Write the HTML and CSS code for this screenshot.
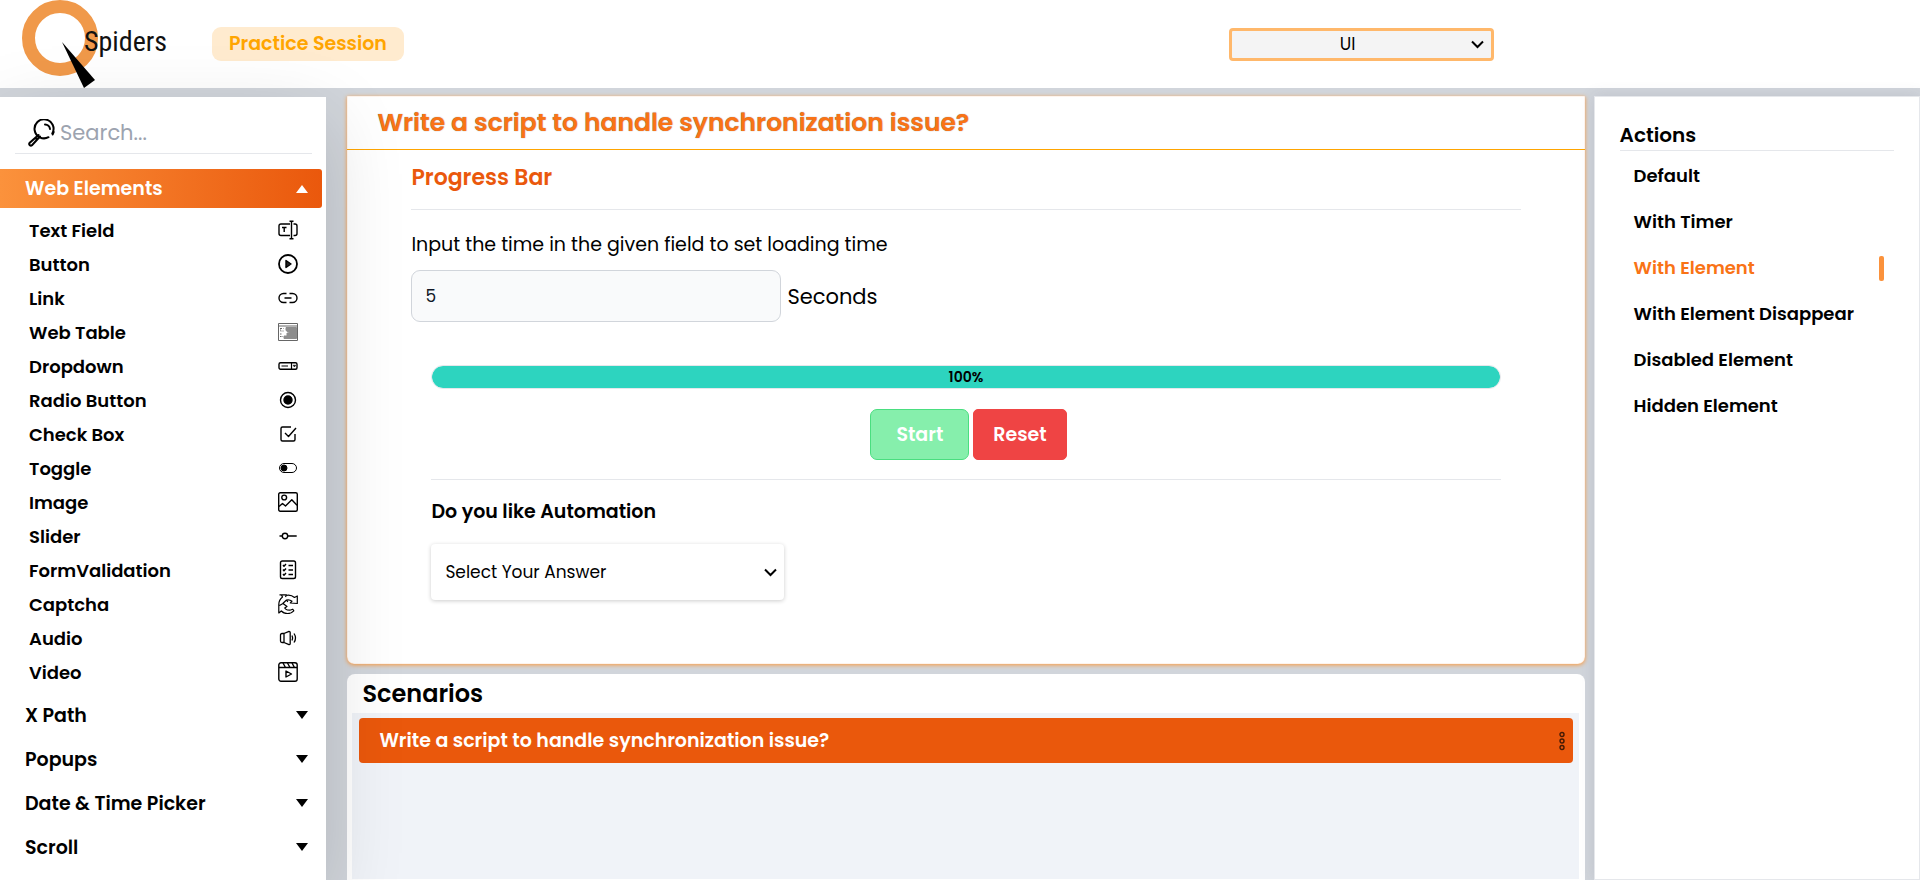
FILE: index.html
```html
<!DOCTYPE html>
<html lang="en">
<head>
<meta charset="utf-8">
<title>QSpiders Practice Session</title>
<link rel="stylesheet" href="styles.css">
</head>
<body>
<header class="topbar">
  <a class="logo" href="#" aria-label="QSpiders home">
    <svg width="150" height="88" viewBox="0 0 150 88">
      <circle cx="38" cy="38" r="31.5" fill="none" stroke="#f0994a" stroke-width="13"/>
      <path d="M40 42 73 80 62 88Z" fill="#000"/>
      <text class="logo-text" x="62" y="51">Spiders</text>
    </svg>
  </a>
  <span class="session">Practice Session</span>
  <select class="topic" aria-label="Topic"><option>UI</option></select>
</header>

<div class="layout">
  <aside class="sidebar">
    <label class="search">
      <svg width="28" height="28" viewBox="0 0 28 28" fill="none" stroke="#000" stroke-width="2" stroke-linecap="round">
        <path d="M24.300 14.500A9.500 9.500 0 1 0 20.500 18.200M24.700 15.500l1-2.500"/>
        <path d="M17 5.500a5 5 0 0 1 5 4.500M10.500 16l-9 8c-1 1.500 1 3.500 2.500 2.200l8-8.700M8 19.500l1 1"/>
      </svg>
      <input type="text" placeholder="Search..." aria-label="Search">
    </label>
    <nav class="menu">
      <button class="group open" type="button">Web Elements <i class="caret"></i></button>
      <ul class="items">
        <li><a href="#">Text Field <svg viewBox="0 0 20 20"><path d="M12 4H3Q1 4 1 6v7.500q0 2 2 2h9M15.500 4H17q2 0 2 2v7.500q0 2-2 2h-1.500M13.500 1.500v17M11.500 1.300h4M11.500 18.700h4M4 7.500h4.500M6.200 7.500v4.500"/></svg></a></li>
        <li><a href="#">Button <svg viewBox="0 0 20 20"><circle cx="10" cy="10" r="9" stroke-width="1.800"/><path d="M8 6.500v7l5-3.500z" fill="#222"/></svg></a></li>
        <li><a href="#">Link <svg viewBox="0 0 20 20"><path d="M8.500 5.500h-3a4.500 4.500 0 0 0 0 9h3M11.500 5.500h3a4.500 4.500 0 0 1 0 9h-3M6.500 10h7"/></svg></a></li>
        <li><a href="#">Web Table <svg viewBox="0 0 20 20"><g stroke="#666" stroke-width="1"><path d="M.5 1.500h19v17H.5zM.5 4h19"/><path d="M8 5.500h10.500v11H6v-2.500h3V11h3L8 8.500z" fill="#8d8d8d" stroke="#8d8d8d"/><path d="M2.500 6v3h3M2.500 6.500h3M2 14.500h3M2 12h1.500" stroke-dasharray="1.500 1"/></g></svg></a></li>
        <li><a href="#">Dropdown <svg viewBox="0 0 20 20"><rect x="1" y="6.800" width="18" height="6.400" rx="1.500"/><path d="M13.500 7v6M3.500 10h6.500" stroke-width="1.200"/><path d="M15 9.200h2.800L16.400 11z" fill="#000" stroke-width=".5"/></svg></a></li>
        <li><a href="#">Radio Button <svg viewBox="0 0 20 20"><circle cx="10" cy="10" r="7.500"/><circle cx="10" cy="10" r="4" fill="#000"/></svg></a></li>
        <li><a href="#">Check Box <svg viewBox="0 0 20 20"><path d="M13 3H4.500Q3 3 3 4.500v11Q3 17 4.500 17h11q1.500 0 1.500-1.500V10M7 9l3.500 3.500L18 4"/></svg></a></li>
        <li><a href="#">Toggle <svg viewBox="0 0 20 20"><rect x="1.500" y="5.500" width="17" height="9" rx="4.500" stroke-width="1"/><circle cx="6" cy="10" r="3" fill="#000" stroke-width="1"/></svg></a></li>
        <li><a href="#">Image <svg viewBox="0 0 20 20"><rect x=".7" y=".7" width="18.600" height="18.600" rx="1.500"/><circle cx="6.200" cy="5.500" r="2.400"/><path d="M1 14.500l3.500-3 3 2.500 6.300-6.300 5.200 5.500"/></svg></a></li>
        <li><a href="#">Slider <svg viewBox="0 0 20 20"><circle cx="7" cy="10" r="2.700"/><path d="M1.500 10h2.800M9.700 10h9"/></svg></a></li>
        <li><a href="#">FormValidation <svg viewBox="0 0 20 20"><rect x="2.500" y="1" width="15" height="17.500" rx="1.800"/><path d="M5 5l1 1.200L8 4M5 9.500l1 1.200 2-2.200M5 14l1 1.200L8 13M10.500 5.500H15M10.500 10H15M10.500 14.500H15"/></svg></a></li>
        <li><a href="#">Captcha <svg viewBox="0 0 20 20"><g stroke-width="1.200"><path d="M1.500.8h7L7.500 3M7.500 1.500c3.500-1 6.500-.3 9 2L19.300 2v7.500l-7-.5 1.700-1.800C12.500 6 10.500 5.500 8.500 6L9.800 8M3.300.8L4.500 3C2 5 .8 7 .8 10.500V19l2.500-2c3.500 3.500 9 3.500 12.500-.2l-1-1.600-3 1-2.500-.2c-1-.4-2-1-2.600-2L9 12.500 5 9.500l-3.500 2M8.500 6L4.800 9.500"/></g></svg></a></li>
        <li><a href="#">Audio <svg viewBox="0 0 20 20"><g stroke-width="1.300"><path d="M6 5.500H4Q2.500 5.500 2.500 7v6q0 1.500 1.500 1.500h2zL11 3.300q1.200 0 1.200 1.200v11q0 1.200-1.200 1.200L6 14.500M14 7.500q1.300 2.500 0 5M16 5.500q3 4.500 0 9"/></g></svg></a></li>
        <li><a href="#">Video <svg viewBox="0 0 20 20"><rect x=".8" y=".8" width="18.400" height="18.400" rx="2.200"/><path d="M1 5.500h18M5 1l2.500 4.500M9.500 1L12 5.500M14 1l2.500 4.500M8 9v6l5.500-3z"/></svg></a></li>
      </ul>
      <button class="group" type="button">X Path <i class="caret"></i></button>
      <button class="group" type="button">Popups <i class="caret"></i></button>
      <button class="group" type="button">Date &amp; Time Picker <i class="caret"></i></button>
      <button class="group" type="button">Scroll <i class="caret"></i></button>
    </nav>
  </aside>

  <main class="content">
    <section class="exercise">
      <h1>Write a script to handle synchronization issue?</h1>
      <div class="exercise-body">
        <h2>Progress Bar</h2>
        <label class="hint" for="secs">Input the time in the given field to set loading time</label>
        <div class="time"><input id="secs" type="text" value="5"><span>Seconds</span></div>
        <div class="run">
          <div class="bar" role="progressbar" aria-valuenow="100" aria-label="Loading"><div class="fill" style="width:100%">100%</div></div>
          <div class="buttons">
            <button class="start" type="button" disabled>Start</button>
            <button class="reset" type="button">Reset</button>
          </div>
          <label class="question" for="answer">Do you like Automation</label>
          <select class="answer" id="answer"><option>Select Your Answer</option></select>
        </div>
      </div>
    </section>
    <section class="scenarios">
      <h2>Scenarios</h2>
      <div class="scenario-list">
        <a class="scenario" href="#">Write a script to handle synchronization issue?
          <svg width="6" height="20" viewBox="0 0 6 20" fill="none" stroke="#431a05" stroke-width="1.400"><circle cx="3" cy="3.500" r="2"/><circle cx="3" cy="10" r="2"/><circle cx="3" cy="16.500" r="2"/></svg>
        </a>
      </div>
    </section>
  </main>

  <aside class="actions">
    <h2>Actions</h2>
    <ul>
      <li><a href="#">Default</a></li>
      <li><a href="#">With Timer</a></li>
      <li><a class="current" href="#">With Element</a></li>
      <li><a href="#">With Element Disappear</a></li>
      <li><a href="#">Disabled Element</a></li>
      <li><a href="#">Hidden Element</a></li>
    </ul>
  </aside>
</div>
</body>
</html>
```
FILE: styles.css
```css
* { box-sizing: border-box; }
body {
  margin: 0;
  height: 100vh;
  display: flex;
  flex-direction: column;
  overflow: hidden;
  background: #d1d5db;
  color: #000;
  font-family: Poppins, Inter, "Open Sans", sans-serif;
  font-size: 18px;
}
h1, h2, ul { margin: 0; padding: 0; }
ul { list-style: none; }
a { color: inherit; text-decoration: none; }
button, input, select { font: inherit; color: inherit; }

.topbar {
  flex: none;
  height: 88px;
  display: flex;
  align-items: center;
  padding-left: 22px;
  background: #fff;
}
.logo { display: block; height: 88px; }
.logo-text { font: 28px "Roboto Condensed", "Liberation Sans Narrow", "Liberation Sans", sans-serif; fill: #111; }
.session {
  margin-left: 40px;
  padding: 0 17px;
  border-radius: 9px;
  background: #ffebcf;
  color: #ffa500;
  font-size: 19px;
  font-weight: 600;
  line-height: 34px;
}
select {
  appearance: none;
  background: url("data:image/svg+xml,%3Csvg xmlns='http://www.w3.org/2000/svg' width='13' height='9' viewBox='0 0 13 9' fill='none' stroke='black' stroke-width='2'%3E%3Cpath d='M1 1.500l5.500 5.500L12 1.500'/%3E%3C/svg%3E") no-repeat right 7px center;
}
.topic {
  width: 265px;
  height: 33px;
  margin-left: auto;
  margin-right: 426px;
  padding: 0 28px 0 0;
  border: 3px solid #ffb86b;
  border-radius: 4px;
  background-color: #f4f4f4;
  font-size: 17px;
  text-align: center;
  text-align-last: center;
}

.layout {
  flex: 1;
  min-height: 0;
  display: grid;
  grid-template-columns: 17% minmax(0, 1fr) 17%;
  padding-top: 8px;
}

.sidebar {
  position: relative;
  z-index: 1;
  margin-top: 1px;
  background: #fff;
  box-shadow: 0 25px 75px rgba(0, 0, 0, .15);
}
.search {
  display: flex;
  align-items: center;
  gap: 4px;
  height: 57px;
  margin: 0 14px 15px 15px;
  padding: 15px 0 0 13px;
  border-bottom: 1px solid #e5e7eb;
}
.search input {
  min-width: 0;
  flex: 1;
  padding: 0;
  border: 0;
  outline: 0;
  background: none;
  font-size: 21px;
}
.search input::placeholder { color: #9ca3af; }
.group {
  display: flex;
  align-items: center;
  justify-content: space-between;
  width: 100%;
  height: 44px;
  padding: 0 18px 0 25px;
  border: 0;
  background: none;
  font-size: 19px;
  font-weight: 600;
}
.group.open {
  width: calc(100% - 4px);
  height: 39px;
  padding-right: 14px;
  border-radius: 0 3px 3px 0;
  background: linear-gradient(90deg, #fb923c, #ea580c);
  color: #fff;
}
.caret {
  border: 6px solid transparent;
  border-top: 8px solid currentColor;
  border-bottom: 0;
}
.open .caret { border-top: 0; border-bottom: 8px solid currentColor; }
.items { padding: 5px 28px 4px 29px; }
.items a {
  display: flex;
  align-items: center;
  justify-content: space-between;
  height: 34px;
  font-weight: 600;
}
.items svg {
  width: 20px;
  height: 20px;
  fill: none;
  stroke: #000;
  stroke-width: 1.400;
  stroke-linejoin: round;
}

.content {
  display: flex;
  flex-direction: column;
  gap: 10px;
  min-height: 0;
  padding: 0 9px 0 21px;
}
.exercise {
  flex: none;
  min-height: 568px;
  border-radius: 0 0 7px 7px;
  background: #fff;
  box-shadow: 0 1px 4px #fb9a3c, inset 0 0 1px #fb923c;
}
.exercise h1 {
  padding: 0 30px;
  border-bottom: 1px solid #ffa500;
  color: #f97316;
  font-size: 25px;
  font-weight: 600;
  line-height: 53px;
  text-shadow: 0 0 1px rgba(0, 0, 0, .5);
}
.exercise-body { padding: 13px 64px 0; }
.exercise-body h2 {
  padding-bottom: 16px;
  border-bottom: 1px solid #e5e7eb;
  color: #ea580c;
  font-size: 22px;
  font-weight: 600;
  line-height: 30px;
}
.hint { display: block; margin: 21px 0 11px; font-size: 19px; line-height: 28px; }
.time { display: flex; align-items: center; gap: 6px; font-size: 21px; }
.time input {
  width: 370px;
  height: 52px;
  padding: 0 13px;
  border: 1px solid #d1d5db;
  border-radius: 9px;
  background: #f9fafb;
  color: #111827;
  font-size: 17px;
}
.run { padding: 43px 20px 0; }
.bar { overflow: hidden; border: 1px solid #e5e7eb; border-radius: 12px; }
.fill {
  background: #2dd4bf;
  border-radius: 12px;
  font-size: 14px;
  font-weight: 600;
  line-height: 22px;
  text-align: center;
}
.buttons {
  display: flex;
  justify-content: center;
  gap: 4px;
  padding: 20px 0 19px 5px;
  border-bottom: 1px solid #e5e7eb;
}
.buttons button {
  height: 51px;
  padding: 0 19px;
  border: 1px solid #ef4444;
  border-radius: 5px;
  background: #ef4444;
  color: #fff;
  font-size: 19px;
  font-weight: 600;
}
.buttons .start { padding: 0 25px; border-color: #4ade80; border-radius: 7px; background: #86efac; }
.question { display: block; margin: 18px 0; font-size: 19px; font-weight: 600; line-height: 28px; }
.answer {
  width: 353px;
  height: 56px;
  padding: 0 14px;
  border: 0;
  border-radius: 4px;
  background-color: #fff;
  box-shadow: 0 1px 4px rgba(0, 0, 0, .2);
  font-size: 17px;
}

.scenarios {
  flex: 1;
  display: flex;
  flex-direction: column;
  padding: 0 6px 1px 5px;
  border-radius: 8px 8px 0 0;
  background: #fff;
}
.scenarios h2 { padding-left: 10px; font-size: 24px; font-weight: 600; line-height: 39px; }
.scenario-list { flex: 1; padding: 5px 6px 5px 7px; background: #f0f3f8; }
.scenario {
  display: flex;
  align-items: center;
  justify-content: space-between;
  height: 45px;
  padding: 0 8px 0 20px;
  border-radius: 4px;
  background: #ea580c;
  color: #fff;
  font-size: 19px;
  font-weight: 600;
}

.actions {
  padding: 24px 25px;
  border: 1px solid #e5e7eb;
  background: #fff;
  box-shadow: 0 0 14px rgba(80, 80, 110, .15);
}
.actions h2 { border-bottom: 1px solid #e5e7eb; font-size: 20px; font-weight: 600; line-height: 29px; }
.actions ul { display: grid; gap: 16px; padding: 10px 10px 0 14px; }
.actions a { display: flex; justify-content: space-between; font-weight: 600; line-height: 30px; }
.actions .current { align-items: center; color: #f97316; }
.current::after { content: ""; width: 5px; height: 25px; border-radius: 2px; background: #fb923c; }
```
